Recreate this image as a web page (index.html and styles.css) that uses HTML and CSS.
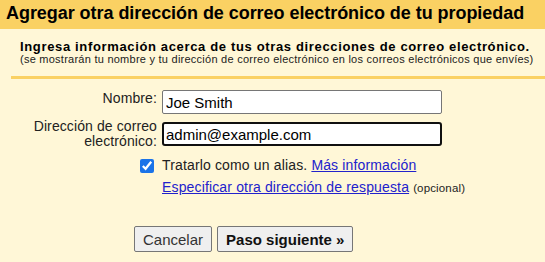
FILE: index.html
```html
<!DOCTYPE html>
<html lang="es">
<head>
  <meta charset="UTF-8">
  <meta name="viewport" content="width=device-width, initial-scale=1.0">
  <title>Agregar otra dirección de correo electrónico</title>
  <link rel="stylesheet" href="styles.css">
</head>
<body>
  <div class="dialog">
    <div class="title">Agregar otra dirección de correo electrónico de tu propiedad</div>
    <div class="intro">
      <div class="intro-main">Ingresa información acerca de tus otras direcciones de correo electrónico.</div>
      <div class="intro-note">(se mostrarán tu nombre y tu dirección de correo electrónico en los correos electrónicos que envíes)</div>
    </div>
    <div class="divider"></div>

    <div class="form">
      <div class="row row-name">
        <label class="label" for="name">Nombre:</label>
        <input type="text" id="name" class="field" value="Joe Smith">
      </div>
      <div class="row row-email">
        <label class="label" for="email">Dirección de correo electrónico:</label>
        <input type="text" id="email" class="field focused" value="admin@example.com">
      </div>
      <div class="row row-alias">
        <div class="label check-cell">
          <input type="checkbox" id="alias" class="checkbox" checked>
        </div>
        <label for="alias" class="text">Tratarlo como un alias. <a href="#">Más información</a></label>
      </div>
      <div class="row row-reply">
        <div class="label"></div>
        <div class="text"><a href="#">Especificar otra dirección de respuesta</a> <span class="optional">(opcional)</span></div>
      </div>
    </div>

    <div class="buttons">
      <button class="btn">Cancelar</button>
      <button class="btn btn-next">Paso siguiente »</button>
    </div>
  </div>
</body>
</html>
```

FILE: styles.css
```css
body {
  margin: 0;
  padding: 0;
  font-family: "Liberation Sans", Arial, sans-serif;
  background-color: #fff7d7;
  color: #222;
}

.dialog {
  width: 545px;
  height: 262px;
  background-color: #fff7d7;
}

.title {
  background-color: #fad163;
  height: 29px;
  line-height: 27px;
  padding-left: 6px;
  font-size: 18px;
  font-weight: bold;
  letter-spacing: -0.05px;
  color: #000;
  white-space: nowrap;
}

.intro {
  padding: 11px 0 0 20px;
}

.intro-main {
  font-size: 13px;
  font-weight: bold;
  line-height: 14px;
  letter-spacing: 0.65px;
  color: #000;
  white-space: nowrap;
}

.intro-note {
  font-size: 11px;
  line-height: 11px;
  letter-spacing: 0.25px;
  color: #222;
  white-space: nowrap;
}

.divider {
  margin: 11px 0 0 11px;
  border-top: 3px solid #fad163;
}

.form {
  padding: 11px 0 0 27px;
}

.row {
  display: flex;
  align-items: flex-start;
}

.label {
  width: 130px;
  flex: none;
  text-align: right;
  font-size: 14px;
  line-height: 15px;
  letter-spacing: 0.1px;
  color: #222;
}

.row-name .label {
  padding-top: 1px;
}

.row-email {
  margin-top: 5px;
  align-items: center;
}

.field {
  margin: 0 0 0 5px;
  box-sizing: border-box;
  width: 280px;
  height: 24px;
  padding: 0 3px;
  border: 1px solid #767676;
  border-radius: 2px;
  background: #fff;
  font-family: "Liberation Sans", Arial, sans-serif;
  font-size: 15px;
  color: #000;
  outline: none;
}

.field.focused {
  border: 2px solid #101010;
  border-radius: 3px;
  padding: 0 2px;
}

.row-alias {
  margin-top: 8px;
  align-items: center;
}

.check-cell {
  display: flex;
  justify-content: flex-end;
  padding-right: 3px;
  box-sizing: border-box;
}

.checkbox {
  margin: 1px 0 0 0;
  width: 14px;
  height: 14px;
  accent-color: #1a73e8;
}

.text {
  margin-left: 5px;
  font-size: 14px;
  line-height: 17px;
  letter-spacing: 0.15px;
  color: #222;
  white-space: nowrap;
}

.row-reply {
  margin-top: 5px;
}

a {
  color: #2222cc;
}

.optional {
  font-size: 11.5px;
}

.buttons {
  display: flex;
  gap: 5px;
  padding: 29px 0 0 134px;
}

.btn {
  height: 26px;
  padding: 0 8px;
  border: 1px solid #767676;
  border-radius: 2px;
  background-color: #efefef;
  font-family: "Liberation Sans", Arial, sans-serif;
  font-size: 15px;
  color: #333;
  cursor: pointer;
}

.btn-next {
  font-weight: bold;
  color: #111;
}
```
